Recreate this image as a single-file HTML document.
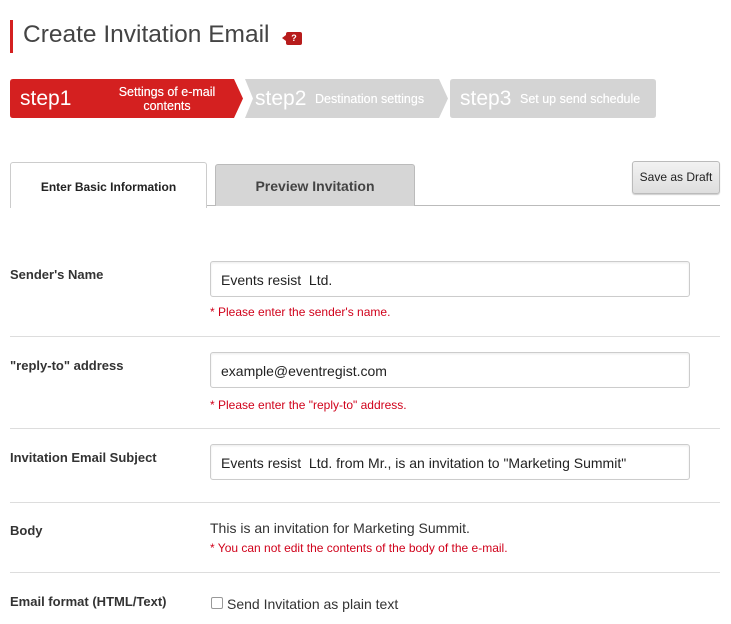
<!DOCTYPE html>
<html><head><style>
body{margin:0;width:731px;height:624px;background:#fff;font-family:"Liberation Sans",Arial,sans-serif;position:relative;overflow:hidden;color:#333}
.a{position:absolute}
.lbl{position:absolute;left:10px;font-size:13px;font-weight:bold;color:#333}
.inp{position:absolute;left:210px;width:480px;height:36px;border:1px solid #ccc;border-radius:3px;box-sizing:border-box;font-size:14px;color:#222;padding:0 10px;line-height:37px;box-shadow:inset 0 1px 2px rgba(0,0,0,.08)}
.err{position:absolute;left:210px;font-size:12px;color:#d0021b}
.sep{position:absolute;left:10px;width:710px;height:1px;background:#ddd}
.step{position:absolute;top:79px;height:39px;color:#fff}
.big{position:absolute;font-size:21px;top:8px}
.sm{position:absolute;font-size:12.5px;text-align:center;line-height:14px;text-shadow:0 0 0.4px #fff}
</style></head><body>
<div class="a" style="left:10px;top:20px;width:3px;height:33px;background:#d42020"></div>
<div class="a" style="left:23px;top:21px;font-size:24.5px;color:#444">Create Invitation Email</div>
<div class="a" style="left:286px;top:32px;width:16px;height:13px;background:#b71c1c;border-radius:2px;color:#fff;font-size:9px;font-weight:bold;text-align:center;line-height:13px">?</div>
<div class="a" style="left:282px;top:35px;width:0;height:0;border-top:3px solid transparent;border-bottom:3px solid transparent;border-right:4px solid #b71c1c"></div>

<svg class="a" style="left:0;top:0" width="731" height="130">
<path d="M13 79H234L243 98.5L234 118H13Q10 118 10 115V82Q10 79 13 79Z" fill="#d42020"/>
<path d="M245 79H439L448 98.5L439 118H245L253 98.5Z" fill="#d4d4d4"/>
<path d="M453 79H653Q656 79 656 82V115Q656 118 653 118H453Q450 118 450 115V82Q450 79 453 79Z" fill="#d4d4d4"/>
</svg>
<div class="step" style="left:10px;width:234px">
<div class="big" style="left:10px">step1</div>
<div class="sm" style="left:82px;width:150px;top:6px">Settings of e-mail<br>contents</div>
</div>
<div class="step" style="left:245px">
<div class="big" style="left:10px">step2</div>
<div class="sm" style="left:70px;width:130px;top:13px;text-align:left">Destination settings</div>
</div>
<div class="step" style="left:450px">
<div class="big" style="left:10px">step3</div>
<div class="sm" style="left:70px;width:140px;top:13px;text-align:left">Set up send schedule</div>
</div>

<div class="a" style="left:10px;top:205px;width:710px;height:1px;background:#bbb"></div>
<div class="a" style="left:10px;top:162px;width:195px;height:45px;border:1px solid #ccc;border-bottom:none;border-radius:3px 3px 0 0;background:#fff;font-size:12px;font-weight:bold;color:#222;text-align:center;line-height:48px">Enter Basic Information</div>
<div class="a" style="left:215px;top:164px;width:198px;height:41px;border:1px solid #bbb;border-bottom:none;border-radius:3px 3px 0 0;background:#d6d6d6;font-size:14px;font-weight:bold;color:#444;text-align:center;line-height:43px">Preview Invitation</div>
<div class="a" style="left:632px;top:161px;width:86px;height:31px;border:1px solid #bbb;border-radius:3px;background:linear-gradient(#f2f2f2,#dedede);font-size:12px;color:#222;text-align:center;line-height:31px;box-shadow:0 1px 1px rgba(0,0,0,.2)">Save as Draft</div>

<div class="lbl" style="top:267px">Sender's Name</div>
<div class="inp" style="top:261px">Events resist&nbsp; Ltd.</div>
<div class="err" style="top:305px">* Please enter the sender's name.</div>
<div class="sep" style="top:336px"></div>

<div class="lbl" style="top:358px">"reply-to" address</div>
<div class="inp" style="top:352px">example@eventregist.com</div>
<div class="err" style="top:398px">* Please enter the "reply-to" address.</div>
<div class="sep" style="top:428px"></div>

<div class="lbl" style="top:450px">Invitation Email Subject</div>
<div class="inp" style="top:444px">Events resist&nbsp; Ltd. from Mr., is an invitation to "Marketing Summit"</div>
<div class="sep" style="top:502px"></div>

<div class="lbl" style="top:523px">Body</div>
<div class="a" style="left:210px;top:520px;font-size:14px;color:#333">This is an invitation for Marketing Summit.</div>
<div class="err" style="top:541px">* You can not edit the contents of the body of the e-mail.</div>
<div class="sep" style="top:572px"></div>

<div class="lbl" style="top:594px">Email format (HTML/Text)</div>
<div class="a" style="left:211px;top:597px;width:10px;height:10px;border:1px solid #999;border-radius:2px;background:#fff"></div>
<div class="a" style="left:227px;top:596px;font-size:14px;color:#333">Send Invitation as plain text</div>
</body></html>
